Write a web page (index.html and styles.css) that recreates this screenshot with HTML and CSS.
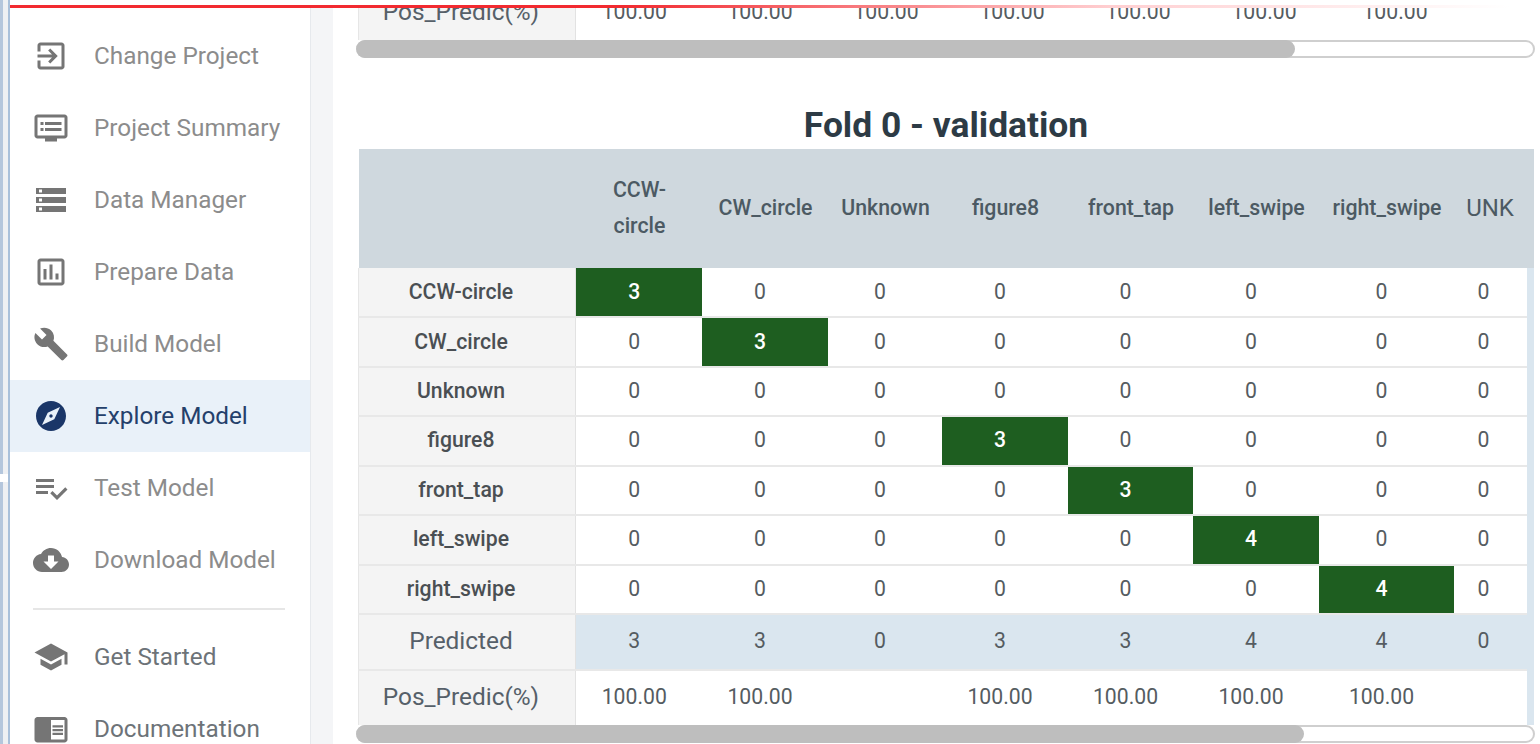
FILE: index.html
```html
<!DOCTYPE html>
<html lang="en">
<head>
    <meta charset="UTF-8">
    <meta name="viewport" content="width=device-width, initial-scale=1.0">
    <link rel="stylesheet" href="styles.css">
</head>
<body>

<!-- Window edge -->
<div class="edge">
    <div class="edge-strip edge-strip-top"></div>
    <div class="edge-strip"></div>
</div>

<div class="app">
    <div class="progress-gap"></div>
    <div class="progress-line"></div>

    <div class="app-body">
        <!-- Sidebar -->
        <nav class="sidebar">
            <a class="nav-item">
                <svg class="nav-icon" viewBox="0 0 24 24"><path d="M10.09 15.59L11.5 17l5-5-5-5-1.41 1.41L12.67 11H3v2h9.67l-2.58 2.59zM19 3H5c-1.11 0-2 .9-2 2v4h2V5h14v14H5v-4H3v4c0 1.1.89 2 2 2h14c1.1 0 2-.9 2-2V5c0-1.1-.9-2-2-2z"/></svg>
                <span>Change Project</span>
            </a>
            <a class="nav-item">
                <svg class="nav-icon" viewBox="0 0 24 24"><path d="M21 3H3c-1.1 0-2 .9-2 2v12c0 1.1.9 2 2 2h5v2h8v-2h5c1.1 0 1.99-.9 1.99-2L23 5c0-1.1-.9-2-2-2zm0 14H3V5h18v12zm-2-9H8v2h11V8zm0 4H8v2h11v-2zM7 8H5v2h2V8zm0 4H5v2h2v-2z"/></svg>
                <span>Project Summary</span>
            </a>
            <a class="nav-item">
                <svg class="nav-icon" viewBox="0 0 24 24"><path d="M2 20h20v-4H2v4zm2-3h2v2H4v-2zM2 4v4h20V4H2zm4 3H4V5h2v2zm-4 7h20v-4H2v4zm2-3h2v2H4v-2z"/></svg>
                <span>Data Manager</span>
            </a>
            <a class="nav-item">
                <svg class="nav-icon" viewBox="0 0 24 24"><path d="M19 3H5c-1.1 0-2 .9-2 2v14c0 1.1.9 2 2 2h14c1.1 0 2-.9 2-2V5c0-1.1-.9-2-2-2zm0 16H5V5h14v14zM7 10h2v7H7zm4-3h2v10h-2zm4 6h2v4h-2z"/></svg>
                <span>Prepare Data</span>
            </a>
            <a class="nav-item">
                <svg class="nav-icon" viewBox="0 0 24 24"><path d="M22.7 19l-9.1-9.1c.9-2.3.4-5-1.5-6.9-2-2-5-2.4-7.4-1.3L9 6 6 9 1.6 4.7C.4 7.1.9 10.1 2.9 12.1c1.9 1.9 4.6 2.4 6.9 1.5l9.1 9.1c.4.4 1 .4 1.4 0l2.3-2.3c.5-.4.5-1.1.1-1.4z"/></svg>
                <span>Build Model</span>
            </a>
            <a class="nav-item active">
                <svg class="nav-icon" viewBox="0 0 24 24"><path d="M12 10.9c-.61 0-1.1.49-1.1 1.1s.49 1.1 1.1 1.1c.61 0 1.1-.49 1.1-1.1s-.49-1.1-1.1-1.1zM12 2C6.48 2 2 6.48 2 12s4.48 10 10 10 10-4.48 10-10S17.52 2 12 2zm2.19 12.19L6 18l3.81-8.19L18 6l-3.81 8.19z"/></svg>
                <span>Explore Model</span>
            </a>
            <a class="nav-item">
                <svg class="nav-icon" viewBox="0 0 24 24"><path d="M14 10H2v2h12v-2zm0-4H2v2h12V6zM2 16h8v-2H2v2zm19.5-4.5L23 13l-6.99 7-4.51-4.5L13 14l3.01 3 5.49-5.5z"/></svg>
                <span>Test Model</span>
            </a>
            <a class="nav-item">
                <svg class="nav-icon" viewBox="0 0 24 24"><path d="M19.35 10.04C18.67 6.59 15.64 4 12 4 9.11 4 6.6 5.64 5.35 8.04 2.34 8.36 0 10.91 0 14c0 3.31 2.69 6 6 6h13c2.76 0 5-2.24 5-5 0-2.64-2.05-4.78-4.65-4.96zM17 13l-5 5-5-5h3V9h4v4h3z"/></svg>
                <span>Download Model</span>
            </a>
            <div class="nav-divider"></div>
            <a class="nav-item">
                <svg class="nav-icon" viewBox="0 0 24 24"><path d="M5 13.18v4L12 21l7-3.82v-4L12 17l-7-3.82zM12 3L1 9l11 6 9-4.91V17h2V9L12 3z"/></svg>
                <span class="nav-strong">Get Started</span>
            </a>
            <a class="nav-item">
                <svg class="nav-icon" viewBox="0 0 24 24"><path d="M13 12h7v1.5h-7zm0-2.5h7V11h-7zm0 5h7V16h-7zM21 4H3c-1.1 0-2 .9-2 2v13c0 1.1.9 2 2 2h18c1.1 0 2-.9 2-2V6c0-1.1-.9-2-2-2zm0 15h-9V6h9v13z"/></svg>
                <span class="nav-strong">Documentation</span>
            </a>
        </nav>

        <div class="gutter"></div>

        <!-- Main content, scrolled part way down the page -->
        <main class="content">
            <table class="matrix matrix-prev">
                <colgroup>
                    <col class="col-label">
                    <col class="col-126"><col class="col-126"><col class="col-126"><col class="col-126"><col class="col-126"><col class="col-126"><col class="col-136"><col>
                </colgroup>
                <tr class="row-pos">
                    <td class="row-name">Pos_Predic(%)</td>
                    <td>100.00</td><td>100.00</td><td>100.00</td><td>100.00</td><td>100.00</td><td>100.00</td><td>100.00</td><td></td>
                </tr>
            </table>
            <div class="hscroll"><div class="hscroll-thumb thumb-prev"></div></div>

            <h2 class="fold-title">Fold 0 - validation</h2>

            <table class="matrix">
                <colgroup>
                    <col class="col-label">
                    <col class="col-126"><col class="col-126"><col class="col-114"><col class="col-126"><col class="col-125"><col class="col-126"><col class="col-135"><col class="col-73"><col class="col-rest">
                </colgroup>
                <tr class="row-head">
                    <th></th><th>CCW-<br>circle</th><th>CW_circle</th><th>Unknown</th><th>figure8</th><th>front_tap</th><th>left_swipe</th><th>right_swipe</th><th class="th-unk">UNK</th><th></th>
                </tr>
                <tr>
                    <td class="row-label">CCW-circle</td>
                    <td class="hit">3</td><td>0</td><td>0</td><td>0</td><td>0</td><td>0</td><td>0</td><td>0</td><td class="cut"></td>
                </tr>
                <tr>
                    <td class="row-label">CW_circle</td>
                    <td>0</td><td class="hit">3</td><td>0</td><td>0</td><td>0</td><td>0</td><td>0</td><td>0</td><td class="cut"></td>
                </tr>
                <tr>
                    <td class="row-label">Unknown</td>
                    <td>0</td><td>0</td><td>0</td><td>0</td><td>0</td><td>0</td><td>0</td><td>0</td><td class="cut"></td>
                </tr>
                <tr>
                    <td class="row-label">figure8</td>
                    <td>0</td><td>0</td><td>0</td><td class="hit">3</td><td>0</td><td>0</td><td>0</td><td>0</td><td class="cut"></td>
                </tr>
                <tr>
                    <td class="row-label">front_tap</td>
                    <td>0</td><td>0</td><td>0</td><td>0</td><td class="hit">3</td><td>0</td><td>0</td><td>0</td><td class="cut"></td>
                </tr>
                <tr>
                    <td class="row-label">left_swipe</td>
                    <td>0</td><td>0</td><td>0</td><td>0</td><td>0</td><td class="hit">4</td><td>0</td><td>0</td><td class="cut"></td>
                </tr>
                <tr>
                    <td class="row-label">right_swipe</td>
                    <td>0</td><td>0</td><td>0</td><td>0</td><td>0</td><td>0</td><td class="hit">4</td><td>0</td><td class="cut"></td>
                </tr>
                <tr class="row-predicted">
                    <td class="row-name">Predicted</td>
                    <td>3</td><td>3</td><td>0</td><td>3</td><td>3</td><td>4</td><td>4</td><td>0</td><td class="cut"></td>
                </tr>
                <tr class="row-pos">
                    <td class="row-name">Pos_Predic(%)</td>
                    <td>100.00</td><td>100.00</td><td></td><td>100.00</td><td>100.00</td><td>100.00</td><td>100.00</td><td></td><td class="cut"></td>
                </tr>
            </table>
            <div class="hscroll"><div class="hscroll-thumb thumb-fold"></div></div>
        </main>
    </div>
</div>

</body>
</html>
```

FILE: styles.css
```css
html, body {
    height: 100%;
}
body {
    margin: 0;
    display: flex;
    background-color: white;
    font-family: Roboto, Arial, sans-serif;
    overflow: hidden;
}

/* Window edge */
.edge {
    width: 10px;
    flex: none;
    display: flex;
    flex-direction: column;
    gap: 8px;
    background: linear-gradient(90deg, transparent 8px, #a9c0da 8px);
}
.edge-strip {
    flex: 1;
    background: linear-gradient(90deg, #b4c6dc 0, #b4c6dc 3px, #eef0f3 3px, #eef0f3 8px, #a9c0da 8px);
}
.edge-strip-top {
    flex: none;
    height: 474px;
}

.app {
    flex: 1;
    min-width: 0;
    display: flex;
    flex-direction: column;
}
.progress-gap {
    height: 5px;
    flex: none;
}
.progress-line {
    height: 3px;
    flex: none;
    background: linear-gradient(90deg, #f22a30 0, #f22a30 40%, #ffcfd1 72%, #ffffff 98%);
}
.app-body {
    flex: 1;
    min-height: 0;
    display: flex;
}

/* Sidebar */
.sidebar {
    width: 300px;
    flex: none;
    padding-top: 12px;
    overflow: hidden;
}
.nav-item {
    height: 72px;
    display: flex;
    align-items: center;
    gap: 25px;
    padding-left: 23px;
    color: #8c8c8c;
    font-size: 24.3px;
}
.nav-item span {
    margin-bottom: 2px;
}
.nav-item.active {
    background-color: #e9f1f9;
    color: #24406b;
}
.nav-strong {
    color: #6d7378;
}
.nav-icon {
    width: 36px;
    height: 36px;
    flex: none;
    fill: #757575;
}
.active .nav-icon {
    fill: #1a3668;
}
.nav-divider {
    height: 2px;
    margin: 12px 25px 11px 23px;
    background-color: #e6e6e6;
}

.gutter {
    width: 22px;
    flex: none;
    background-color: #f4f5f7;
    border-left: 1px solid #e6e9ed;
}

/* Main content */
.content {
    flex: 1;
    min-width: 0;
    padding: 0 6px 0 25px;
    overflow: hidden;
}
.matrix {
    width: 1176px;
    border-collapse: collapse;
    table-layout: fixed;
    color: #555c61;
    font-size: 21.2px;
}
.matrix-prev {
    margin-top: -23px;
}
.col-label { width: 217px; }
.col-126 { width: 126px; }
.col-136 { width: 136px; }
.col-114 { width: 114px; }
.col-125 { width: 125px; }
.col-135 { width: 135px; }
.col-73 { width: 73px; }
.col-rest { width: 7px; }

.matrix th {
    padding: 0 0 2px 2px;
    box-sizing: border-box;
    height: 119px;
    background-color: #cfd8de;
    color: #4c5a63;
    font-size: 21.3px;
    font-weight: 500;
    line-height: 36px;
}
.matrix .th-unk {
    padding-left: 0;
    font-weight: 400;
    font-size: 24px;
}
.matrix td {
    height: 49.43px;
    padding: 0 9px 2px 0;
    box-sizing: border-box;
    text-align: center;
    border-bottom: 2px solid #e8e8e8;
}
.matrix td:nth-child(9) {
    padding-right: 13px;
}
.matrix .row-label,
.matrix .row-name {
    padding-right: 12px;
    background-color: #f4f4f4;
    border-left: 1px solid #e6e6e6;
    border-right: 1px solid #e2e2e2;
}
.row-label {
    color: #4a4f53;
    font-weight: 500;
}
.matrix .row-name {
    color: #566069;
    font-size: 24.4px;
}
.matrix .hit {
    background-color: #1e5e20;
    color: white;
    font-weight: 500;
}
.matrix .cut {
    padding: 0;
    background-color: #dae6ef;
    border-bottom: none;
}
.row-predicted td {
    height: 56px;
    background-color: #dae6ef;
}
.row-pos td {
    height: 55px;
    border-bottom: none;
}

.fold-title {
    margin: 0;
    padding-top: 48px;
    height: 43px;
    line-height: 38px;
    text-align: center;
    color: #2d3b45;
    font-size: 35.4px;
    font-weight: 700;
}

/* Horizontal scrollbar */
.hscroll {
    width: 1179px;
    height: 18px;
    margin-left: -2px;
    box-sizing: border-box;
    border: 2px solid #cfcfcf;
    border-left: none;
    border-radius: 9px;
    background-color: white;
}
.hscroll-thumb {
    height: 18px;
    margin-top: -2px;
    border-radius: 9px;
    background-color: #bebebe;
}
.thumb-prev {
    width: 939px;
}
.thumb-fold {
    width: 948px;
}
```
